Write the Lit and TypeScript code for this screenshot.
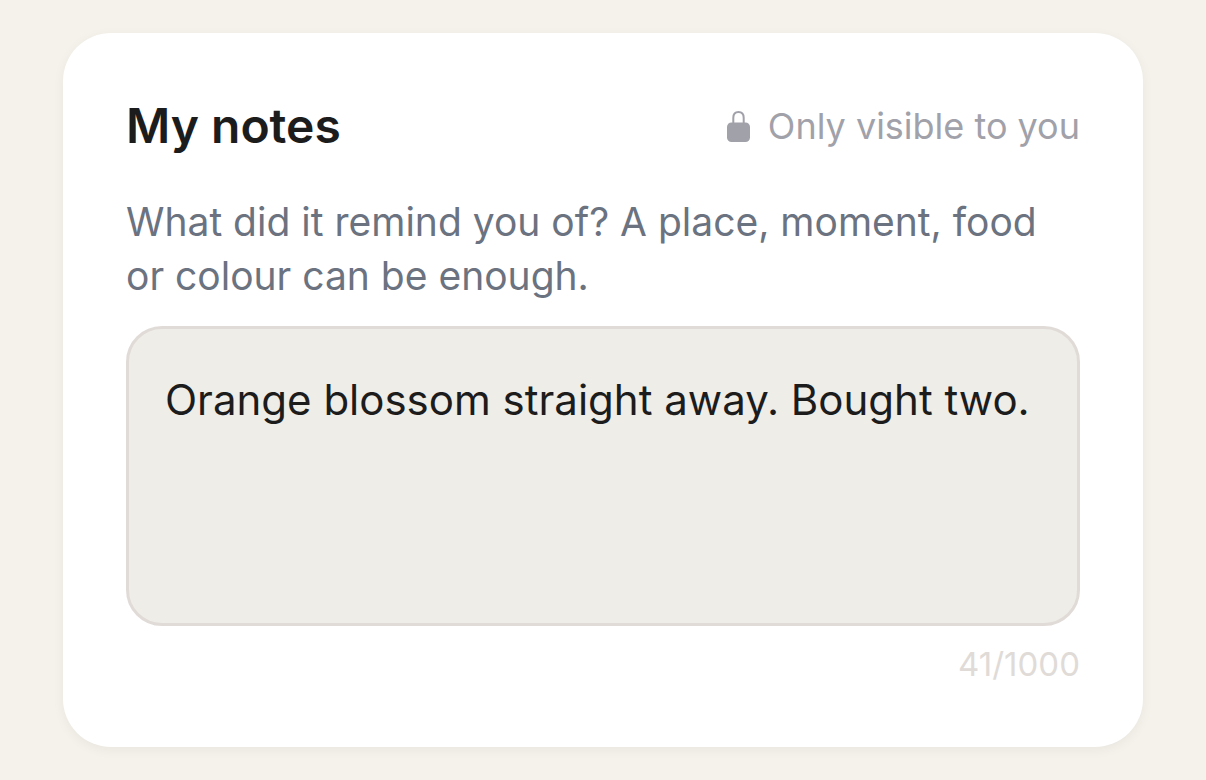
import { LitElement, html, css } from "lit";
import { customElement, state } from "lit/decorators.js";

@customElement("app-root")
export class AppRoot extends LitElement {
  static styles = css`
    :host {
      display: block;
      box-sizing: border-box;
      min-height: 100vh;
      padding: 33px 63px;
      background: #f5f2eb;
      font-family: Inter, "Liberation Sans", sans-serif;
      color: #1c1c1c;
    }
    .card {
      box-sizing: border-box;
      padding: 63px;
      border-radius: 48px;
      background: #fff;
      box-shadow: 0 3px 12px rgba(0, 0, 0, 0.05);
    }
    .head {
      display: flex;
      align-items: center;
      justify-content: space-between;
      gap: 24px;
    }
    .title {
      margin: 0;
      font-size: 48px;
      line-height: 60px;
      font-weight: 600;
    }
    .privacy {
      display: flex;
      align-items: center;
      gap: 16px;
      font-size: 36px;
      line-height: 48px;
      color: #a1a1aa;
    }
    .lock {
      width: 26px;
      height: 34px;
    }
    .prompt {
      display: block;
      margin-top: 39px;
      font-size: 39px;
      line-height: 54px;
      color: #6b7280;
    }
    .notes {
      display: block;
      box-sizing: border-box;
      width: 100%;
      height: 300px;
      margin: 23px 0 0;
      padding: 41px 36px;
      border: 3px solid #e0dbd7;
      border-radius: 36px;
      outline: none;
      resize: none;
      background: #efede7;
      font-family: inherit;
      font-size: 42px;
      line-height: 60px;
      color: #1c1c1c;
    }
    .count {
      margin: 18px 0 0;
      font-size: 33px;
      line-height: 40px;
      text-align: right;
      color: #e0dbd7;
    }
  `;

  @state() private text = "Orange blossom straight away. Bought two.";

  private onInput(event: Event) {
    this.text = (event.target as HTMLTextAreaElement).value;
  }

  render() {
    return html`
      <section class="card">
        <header class="head">
          <h2 class="title">My notes</h2>
          <span class="privacy">
            <svg class="lock" viewBox="0 0 26 34" aria-hidden="true">
              <path d="M7.300 15V8.800C7.300 5 9.500 2.900 12.500 2.900S17.700 5 17.700 8.800V15" fill="none" stroke="currentColor" stroke-width="2" />
              <rect x="1" y="13.500" width="23" height="19.500" rx="4.500" fill="currentColor" />
            </svg>
            Only visible to you
          </span>
        </header>
        <label class="prompt" for="notes">What did it remind you of? A place, moment, food or colour can be enough.</label>
        <textarea class="notes" id="notes" maxlength="1000" spellcheck="false" .value=${this.text} @input=${this.onInput}></textarea>
        <p class="count">${this.text.length}/1000</p>
      </section>
    `;
  }
}
